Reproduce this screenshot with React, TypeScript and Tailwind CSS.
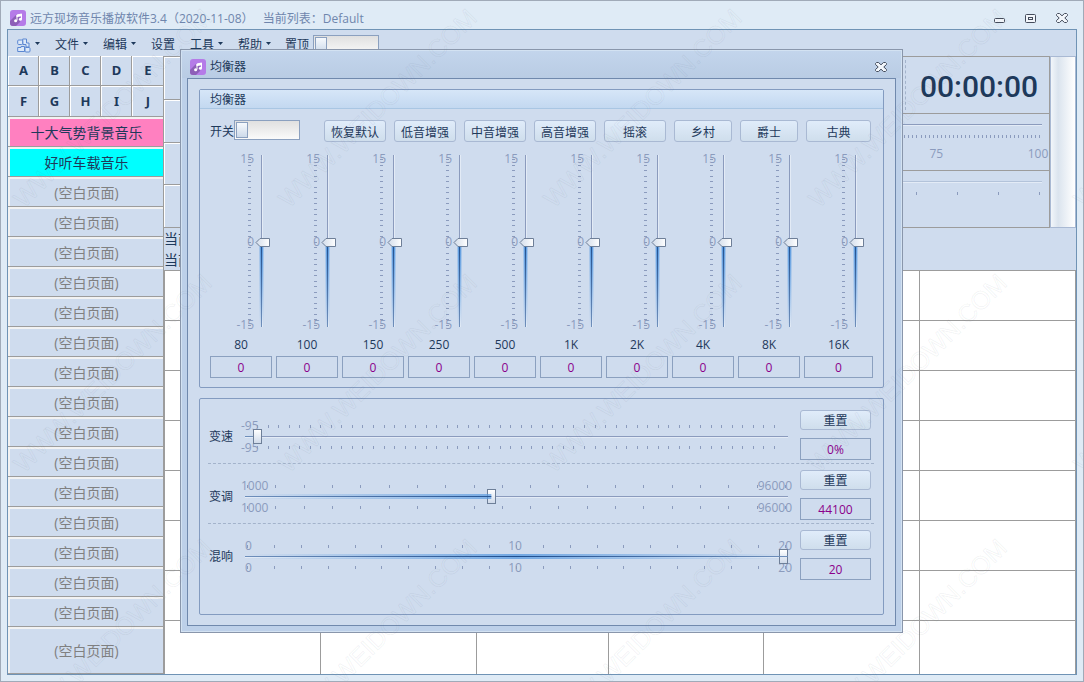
import { useState } from 'react';

type Band = { label: string; value: number };

const LETTERS = ['A', 'B', 'C', 'D', 'E', 'F', 'G', 'H', 'I', 'J'];

const PAGES = [
  { name: '十大气势背景音乐', tone: 'bg-[#ff80c0] text-[#1e395b]' },
  { name: '好听车载音乐', tone: 'bg-[#00ffff] text-[#1e395b]' },
  ...Array.from({ length: 16 }, () => ({ name: '(空白页面)', tone: 'bg-[#cfdcee] text-[#808080]' })),
];

const MENUS = [
  { name: '文件', caret: true },
  { name: '编辑', caret: true },
  { name: '设置', caret: false },
  { name: '工具', caret: true },
  { name: '帮助', caret: true },
];

const PRESETS = ['恢复默认', '低音增强', '中音增强', '高音增强', '摇滚', '乡村', '爵士', '古典'];

const BANDS = ['80', '100', '150', '250', '500', '1K', '2K', '4K', '8K', '16K'];

const BUTTON =
  'rounded-[3px] border border-[#a9b9d3] bg-linear-to-b from-[#e0ecfa] to-[#cfdeec] text-center text-[#1e395b]';
const VALUE_BOX = 'h-[22px] w-full min-w-0 border border-[#8ba0bf] bg-transparent text-center text-[#8b008b] outline-none';
const STACK = '[grid-area:1/1]';

function AppIcon() {
  return (
    <svg width="16" height="16" viewBox="0 0 16 16" aria-hidden="true" className="shrink-0">
      <rect width="16" height="16" rx="3" fill="#b57be8" />
      <path d="M0 11L6 5L11 8L10 12L6 16H3Q0 16 0 13Z" fill="#8d5fb8" />
      <path d="M7 10.5V5L11.5 4V9" fill="none" stroke="#fff" strokeWidth="1" />
      <path d="M6.5 5L12 3.8V6L6.5 7.2Z" fill="#fff" />
      <circle cx="5.6" cy="10.7" r="1.5" fill="#fff" />
      <circle cx="10.4" cy="9.3" r="1.5" fill="#fff" />
    </svg>
  );
}

function CloseIcon() {
  return (
    <svg width="12" height="10" viewBox="0 0 12 10" aria-hidden="true">
      <path
        d="M1.5 .5H3.5L6 2.8L8.5 .5H10.5L11.5 1.5V2.5L8.8 5L11.5 7.5V8.5L10.5 9.5H8.5L6 7.2L3.5 9.5H1.5L.5 8.5V7.5L3.2 5L.5 2.5V1.5Z"
        fill="#f2f6fb"
        stroke="#444c5c"
      />
    </svg>
  );
}

function Caret() {
  return (
    <svg width="5" height="3" viewBox="0 0 5 3" aria-hidden="true" className="mb-1">
      <path d="M0 0H5L2.5 3Z" fill="#1e395b" />
    </svg>
  );
}

function Toggle({ id }: { id: string }) {
  return (
    <input
      id={id}
      type="checkbox"
      className="flex h-5 w-[66px] appearance-none items-center border border-[#8ba0bf] bg-linear-to-b from-[#e0e0e0] to-[#fafafa] px-px before:h-4 before:w-3 before:border before:border-[#8ba0bf] before:bg-linear-to-b before:from-[#f6f9fd] before:to-[#cddaea] checked:justify-end"
    />
  );
}

function Ticks({ count, className }: { count: number; className: string }) {
  return (
    <div className={`flex justify-between ${className}`}>
      {Array.from({ length: count }, (_, i) => (
        <span key={i} className="h-[3px] w-px bg-[#8b9bbd]" />
      ))}
    </div>
  );
}

function BandSlider({ band, onChange }: { band: Band; onChange: (v: number) => void }) {
  const y = 89 - band.value * 5.53;
  const id = `band-${band.label}`;
  return (
    <div className="flex flex-col">
      <div className="grid h-[178px] justify-start">
        <div className={`${STACK} flex w-11 flex-col justify-between text-right leading-3 text-[#8b9bbd]`}>
          <span>15</span>
          <span>0</span>
          <span>-15</span>
        </div>
        <svg width="62" height="178" viewBox="0 0 62 178" aria-hidden="true" className={STACK}>
          <defs>
            <linearGradient id={`${id}-glow`} x1="0" x2="0" y1="89" y2="174" gradientUnits="userSpaceOnUse">
              <stop offset="0" stopColor="#5b9be0" />
              <stop offset="1" stopColor="#5b9be0" stopOpacity="0" />
            </linearGradient>
            <linearGradient id={`${id}-core`} x1="0" x2="0" y1="89" y2="174" gradientUnits="userSpaceOnUse">
              <stop offset="0" stopColor="#1f4f8f" />
              <stop offset="1" stopColor="#6f8fbb" />
            </linearGradient>
            <linearGradient id={`${id}-thumb`}>
              <stop offset="0" stopColor="#d2dcea" />
              <stop offset="1" stopColor="#ffffff" />
            </linearGradient>
          </defs>
          {Array.from({ length: 31 }, (_, i) => (
            <rect key={i} x="38" y={Math.round(6 + i * 5.53)} width="3" height="1" fill="#8b9bbd" />
          ))}
          <rect x="51" y="2" width="1" height="172" fill="#8b9bbd" />
          <rect x="52" y="2" width="1" height="172" fill="#e3ebf6" />
          <rect x="49" y={y} width="5" height={174 - y} fill={`url(#${id}-glow)`} opacity=".4" />
          <rect x="50" y={y} width="3" height={174 - y} fill={`url(#${id}-glow)`} />
          <rect x="51" y={y} width="1" height={174 - y} fill={`url(#${id}-core)`} />
          <path
            d={`M46 ${y + 0.5}L50 ${y - 3.5}H59.5V${y + 4.5}H50Z`}
            fill={`url(#${id}-thumb)`}
            stroke="#6e7f98"
          />
        </svg>
        <input
          type="range"
          min={-15}
          max={15}
          value={band.value}
          aria-label={`${band.label} Hz`}
          onChange={(e) => onChange(Number(e.target.value))}
          className={`${STACK} w-5 justify-self-end opacity-0 [direction:rtl] [writing-mode:vertical-lr]`}
        />
      </div>
      <label htmlFor={id} className="mt-[7px] mb-1 text-center leading-[14px]">
        {band.label}
      </label>
      <input id={id} className={VALUE_BOX} value={band.value} readOnly />
    </div>
  );
}

type RowProps = {
  id: string;
  name: string;
  min: number;
  max: number;
  initial: number;
  unit?: string;
  ticks: number;
  tickInset: string;
  labels: string[];
  labelInset: string;
  divider: string;
};

function EffectRow(p: RowProps) {
  const [value, setValue] = useState(p.initial);
  const share = ((value - p.min) / (p.max - p.min)) * 100;
  return (
    <div className={`mr-[9px] ml-2 flex h-[60px] gap-3 border-b pt-[6px] pr-[3px] pl-px ${p.divider}`}>
      <label htmlFor={p.id} className="flex w-6 shrink-0 items-center whitespace-nowrap">
        {p.name}
      </label>
      <div className="grid min-w-0 flex-1 items-center">
        <div className={`${STACK} -mx-1 flex flex-col gap-[10px] pt-px leading-3 text-[#8b9bbd] ${p.labelInset}`}>
          {[0, 1].map((n) => (
            <div key={n} className="flex justify-between">
              {p.labels.map((l) => (
                <span key={l}>{l}</span>
              ))}
            </div>
          ))}
        </div>
        <div className={`${STACK} flex flex-col gap-[18px] ${p.tickInset}`}>
          <Ticks count={p.ticks} className="" />
          <Ticks count={p.ticks} className="" />
        </div>
        <div className={`${STACK} h-[2px] border-t border-[#8b9bbd] bg-[#e3ebf6]`} />
        <div
          className={`${STACK} h-[5px] bg-linear-to-r from-[#5b9be0]/0 via-[#5b9be0]/80 to-[#5b9be0]/0`}
          style={{ clipPath: `inset(0 ${100 - share}% 0 0)` }}
        />
        <div
          className={`${STACK} h-px bg-linear-to-r from-[#6f8fbb] via-[#1f4f8f] to-[#6f8fbb]`}
          style={{ clipPath: `inset(0 ${100 - share}% 0 0)` }}
        />
        <input
          id={p.id}
          type="range"
          min={p.min}
          max={p.max}
          value={value}
          onChange={(e) => setValue(Number(e.target.value))}
          className={`${STACK} h-[15px] w-full appearance-none bg-transparent [&::-webkit-slider-thumb]:h-[15px] [&::-webkit-slider-thumb]:w-[9px] [&::-webkit-slider-thumb]:appearance-none [&::-webkit-slider-thumb]:border [&::-webkit-slider-thumb]:border-[#6e7f98] [&::-webkit-slider-thumb]:bg-linear-to-b [&::-webkit-slider-thumb]:from-white [&::-webkit-slider-thumb]:to-[#cfdaea]`}
        />
      </div>
      <div className="flex w-[71px] shrink-0 flex-col gap-2">
        <button type="button" className={`${BUTTON} h-5 shrink-0 leading-5`} onClick={() => setValue(p.initial)}>
          重置
        </button>
        <input className={`${VALUE_BOX} shrink-0`} value={`${value}${p.unit ?? ''}`} aria-label={p.name} readOnly />
      </div>
    </div>
  );
}

function Equalizer() {
  const [bands, setBands] = useState<Band[]>(BANDS.map((label) => ({ label, value: 0 })));
  const setBand = (i: number, value: number) =>
    setBands((all) => all.map((b, n) => (n === i ? { ...b, value } : b)));

  return (
    <section
      role="dialog"
      aria-label="均衡器"
      className="absolute top-12 left-[179px] w-[723px] border border-[#8996ab] bg-[#bdd0e9]"
    >
      <div className="border border-[#d3e2f2] px-[5px] pb-[5px]">
        <header className="-mx-[5px] flex h-[27px] items-center gap-1 bg-linear-to-b from-[#c3d5ec] to-[#b9cce4] pr-[14px] pl-2 pt-1">
          <AppIcon />
          <h2 className="flex-1">均衡器</h2>
          <button type="button" aria-label="关闭">
            <CloseIcon />
          </button>
        </header>
        <div className="flex flex-col gap-[10px] border border-[#7089ad] bg-[#cfdcee] px-[11px] py-[10px]">
          <div className="rounded-[2px] border border-[#839bc0] pb-[9px]">
            <h3 className="h-[19px] border-b border-[#a9c6e3] bg-linear-to-b from-[#d6e6f8] to-[#c3d8f0] pl-[10px] leading-5">
              均衡器
            </h3>
            <div className="flex items-start justify-between px-[10px] pt-[11px] pr-3">
              <div className="flex items-center">
                <label htmlFor="eq-on" className="pt-1">
                  开关
                </label>
                <Toggle id="eq-on" />
              </div>
              <div className="grid grid-cols-[62fr_62fr_62fr_62fr_62fr_58fr_58fr_65fr] gap-2">
                {PRESETS.map((name) => (
                  <button
                    key={name}
                    type="button"
                    className={`${BUTTON} h-[22px] px-[6px] leading-6 whitespace-nowrap`}
                    onClick={() => setBands(BANDS.map((label) => ({ label, value: 0 })))}
                  >
                    {name}
                  </button>
                ))}
              </div>
            </div>
            <div className="mt-[11px] grid grid-cols-[repeat(9,62fr)_69fr] gap-1 px-[10px]">
              {bands.map((band, i) => (
                <BandSlider key={band.label} band={band} onChange={(v) => setBand(i, v)} />
              ))}
            </div>
          </div>
          <div className="rounded-[2px] border border-[#839bc0] pt-[5px] pb-[30px]">
            <EffectRow
              id="fx-speed"
              name="变速"
              min={-95}
              max={6500}
              initial={0}
              unit="%"
              ticks={50}
              tickInset="pl-3 pr-[13px]"
              labels={['-95']}
              labelInset=""
              divider="border-dashed border-[#a3b3cb]"
            />
            <EffectRow
              id="fx-pitch"
              name="变调"
              min={1000}
              max={96000}
              initial={44100}
              ticks={20}
              tickInset="px-[2px]"
              labels={['1000', '96000']}
              labelInset=""
              divider="border-dashed border-[#a3b3cb]"
            />
            <EffectRow
              id="fx-reverb"
              name="混响"
              min={0}
              max={20}
              initial={20}
              ticks={21}
              tickInset="px-[2px]"
              labels={['0', '10', '20']}
              labelInset="pl-1"
              divider="border-transparent"
            />
          </div>
        </div>
      </div>
    </section>
  );
}

function PlayerPanel() {
  return (
    <div className="flex h-[172px]">
      <div className="grid w-[156px] grid-rows-4 border-t border-[#9c9c9c]">
        {[0, 1, 2, 3].map((n) => (
          <div key={n} className="border-b border-[#9c9c9c]">
            <div className="h-full border-t border-l border-white" />
          </div>
        ))}
      </div>
      <div className="flex-1 border-y border-l border-[#9c9c9c]" />
      <div className="grid w-[430px] grid-rows-3 border-t border-r border-[#9c9c9c]">
        <div className="flex items-center justify-end border-b border-[#9c9c9c] pr-[11px]">
          <div className="mr-[14px] h-[50px] border-l border-dashed border-[#a3b3cb]" />
          <time className="pt-[3px] font-[Roboto,sans-serif] text-[30px] leading-8 font-medium">00:00:00</time>
        </div>
        <div className="border-b border-[#9c9c9c] pr-[7px] pl-2 pt-[10px]">
          <div className="h-[2px] border-t border-[#8b9bbd] bg-[#e3ebf6]" />
          <Ticks count={101} className="mt-[9px] mr-[2px] ml-[3px]" />
          <div className="mt-2 mr-1 ml-[3px] flex justify-between text-[#8b9bbd]">
            {['0', '25', '50', '75', '100'].map((t) => (
              <span key={t} className="flex w-0 justify-center">
                {t}
              </span>
            ))}
          </div>
        </div>
        <div className="border-b border-[#9c9c9c] pr-[7px] pl-2 pt-[10px]">
          <div className="h-[2px] border-t border-[#b3c3da] bg-[#e3ebf6]" />
          <Ticks count={11} className="mt-[9px] mr-[2px]" />
        </div>
      </div>
      <div className="w-[26px] border border-[#a9b9d3] bg-linear-to-r from-[#f2f6fa] via-[#dbe4ee] via-30% to-white" />
    </div>
  );
}

function Watermark() {
  const starts = [-255, 10, 275, 540, 805, 1070];
  const rows = [205, 470, 735, 1000];
  return (
    <svg aria-hidden="true" className="pointer-events-none absolute inset-0 h-full w-full">
      <g fill="none" stroke="#5a6478" strokeOpacity=".07" fontFamily="Liberation Sans" fontSize="25">
        {rows.map((y) =>
          starts.map((x) => (
            <text key={`${x}-${y}`} transform={`translate(${x + 13} ${y + 3}) rotate(-45)`}>
              WWW.WEIDOWN.COM
            </text>
          )),
        )}
      </g>
    </svg>
  );
}

export default function App() {
  return (
    <div className="relative flex min-h-screen flex-col overflow-hidden border border-[#a0aab8] bg-[#dfebf6] px-[6px] pb-[6px] font-['Open_Sans','Noto_Sans_CJK_SC',sans-serif] text-xs text-[#1e395b]">
      <header className="flex h-7 items-center gap-1 pt-[6px] pr-2 pl-[3px] text-[#6f86ad]">
        <AppIcon />
        <h1 className="flex-1 pt-[2px] whitespace-pre">远方现场音乐播放软件3.4（2020-11-08）{'  '} 当前列表：Default</h1>
        <div className="flex items-center gap-5 pr-px">
          <button type="button" aria-label="最小化">
            <svg width="11" height="9" viewBox="0 0 11 9" aria-hidden="true">
              <rect x=".5" y="4.5" width="10" height="4" rx="1" fill="#f2f6fb" stroke="#444c5c" />
            </svg>
          </button>
          <button type="button" aria-label="最大化">
            <svg width="11" height="9" viewBox="0 0 11 9" aria-hidden="true">
              <rect x=".5" y=".5" width="10" height="8" rx="1" fill="#f2f6fb" stroke="#444c5c" />
              <rect x="3.5" y="3.5" width="4" height="2" fill="none" stroke="#444c5c" />
            </svg>
          </button>
          <button type="button" aria-label="关闭">
            <CloseIcon />
          </button>
        </div>
      </header>

      <div className="flex flex-1 flex-col border border-[#6f93b5] bg-[#cfdcee]">
        <nav className="flex h-[26px] items-center gap-[15px] pt-1 pl-[9px]">
          <button type="button" aria-label="布局" className="flex items-center gap-1">
            <svg width="14" height="15" viewBox="0 0 14 15" aria-hidden="true" fill="#dce8f8" stroke="#5b87d2">
              <rect x=".7" y="2" width="5" height="4.5" rx="1" />
              <path d="M5.7 1H9.5V5H12V9H9V6.5H6Z" />
              <path d="M.7 9.5H4V8.5H7.5V13.5H.7Z" />
              <rect x="8" y="9.5" width="5" height="4.5" rx="1" />
            </svg>
            <Caret />
          </button>
          {MENUS.map((m) => (
            <button key={m.name} type="button" className="flex items-center gap-1">
              {m.name}
              {m.caret && <Caret />}
            </button>
          ))}
          <div className="-ml-px flex items-center gap-1">
            <label htmlFor="on-top">置顶</label>
            <Toggle id="on-top" />
          </div>
        </nav>

        <div className="flex flex-1">
          <aside className="flex w-[156px] shrink-0 flex-col">
            <div className="grid grid-cols-[31px_31px_31px_31px_1fr] grid-rows-[30px_31px]">
              {LETTERS.map((l) => (
                <button key={l} type="button" className="border-r border-b border-[#9c9c9c]">
                  <span className="flex h-full items-center justify-center border-t border-l border-white font-['Noto_Sans',sans-serif] text-[13px] font-bold">
                    {l}
                  </span>
                </button>
              ))}
            </div>
            {PAGES.map((page, i) => (
              <button
                key={i}
                type="button"
                className="h-[30px] border-r border-b border-[#9c9c9c] text-sm last:h-auto last:min-h-[47px] last:flex-1"
              >
                <span className={`flex h-full items-center justify-center border-t-2 border-l-2 border-[#f2f2f2] ${page.tone}`}>
                  {page.name}
                </span>
              </button>
            ))}
          </aside>

          <main className="flex min-w-0 flex-1 flex-col">
            <PlayerPanel />
            <div className="flex h-[42px] flex-col justify-center text-sm leading-[21px]">
              <p>当前</p>
              <p>当前</p>
            </div>
            <table className="w-full flex-1 table-fixed border-collapse border-x border-t border-[#9c9c9c] bg-white" aria-label="曲目">
              <colgroup>
                <col className="w-[156px]" />
                <col className="w-[156px]" />
                <col className="w-[132px]" />
                <col className="w-[155px]" />
                <col className="w-[156px]" />
                <col />
              </colgroup>
              <tbody>
                {Array.from({ length: 8 }, (_, r) => (
                  <tr key={r} className="h-[50px] last:h-[53px]">
                    {Array.from({ length: 6 }, (_, c) => (
                      <td key={c} className="border-t border-l border-[#9c9c9c]" />
                    ))}
                  </tr>
                ))}
              </tbody>
            </table>
          </main>
        </div>
      </div>

      <Equalizer />
      <Watermark />
    </div>
  );
}
